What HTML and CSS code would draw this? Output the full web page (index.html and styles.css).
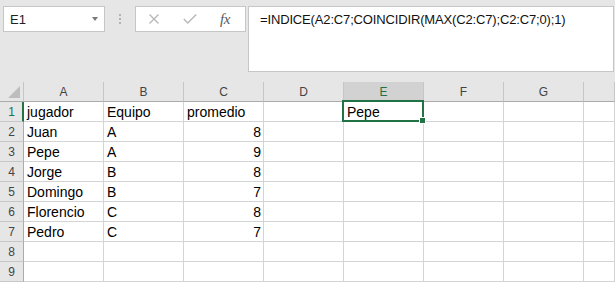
FILE: index.html
```html
<!DOCTYPE html>
<html lang="es">
<head>
  <meta charset="UTF-8" />
  <title>Libro1 - Excel</title>
  <link rel="stylesheet" href="styles.css">
</head>
<body>
  <div class="toolbar">
    <div class="nameBox">
      <span>E1</span>
      <span class="caret"></span>
    </div>
    <div class="grip"><i></i><i></i><i></i></div>
    <div class="fxButtons">
      <svg class="cancel" width="10" height="10" viewBox="0 0 10 10">
        <path d="M0.5 0.5 L9.5 9.5 M9.5 0.5 L0.5 9.5" />
      </svg>
      <svg class="enter" width="14" height="10" viewBox="0 0 14 10">
        <path d="M0.8 5 L4.8 9 L13.2 0.6" />
      </svg>
      <span class="fx">fx</span>
    </div>
    <div class="formula">=INDICE(A2:C7;COINCIDIR(MAX(C2:C7);C2:C7;0);1)</div>
  </div>

  <div class="sheet">
    <div class="row head">
      <div class="corner"><span class="tri"></span></div>
      <div class="colHead">A</div>
      <div class="colHead">B</div>
      <div class="colHead">C</div>
      <div class="colHead">D</div>
      <div class="colHead active">E</div>
      <div class="colHead">F</div>
      <div class="colHead">G</div>
      <div class="colHead last"></div>
    </div>

    <div class="row">
      <div class="rowHead active">1</div>
      <div class="c">jugador</div><div class="c">Equipo</div><div class="c">promedio</div>
      <div class="c"></div><div class="c">Pepe</div><div class="c"></div><div class="c"></div><div class="c"></div>
    </div>
    <div class="row">
      <div class="rowHead">2</div>
      <div class="c">Juan</div><div class="c">A</div><div class="c num">8</div>
      <div class="c"></div><div class="c"></div><div class="c"></div><div class="c"></div><div class="c"></div>
    </div>
    <div class="row">
      <div class="rowHead">3</div>
      <div class="c">Pepe</div><div class="c">A</div><div class="c num">9</div>
      <div class="c"></div><div class="c"></div><div class="c"></div><div class="c"></div><div class="c"></div>
    </div>
    <div class="row">
      <div class="rowHead">4</div>
      <div class="c">Jorge</div><div class="c">B</div><div class="c num">8</div>
      <div class="c"></div><div class="c"></div><div class="c"></div><div class="c"></div><div class="c"></div>
    </div>
    <div class="row">
      <div class="rowHead">5</div>
      <div class="c">Domingo</div><div class="c">B</div><div class="c num">7</div>
      <div class="c"></div><div class="c"></div><div class="c"></div><div class="c"></div><div class="c"></div>
    </div>
    <div class="row">
      <div class="rowHead">6</div>
      <div class="c">Florencio</div><div class="c">C</div><div class="c num">8</div>
      <div class="c"></div><div class="c"></div><div class="c"></div><div class="c"></div><div class="c"></div>
    </div>
    <div class="row">
      <div class="rowHead">7</div>
      <div class="c">Pedro</div><div class="c">C</div><div class="c num">7</div>
      <div class="c"></div><div class="c"></div><div class="c"></div><div class="c"></div><div class="c"></div>
    </div>
    <div class="row">
      <div class="rowHead">8</div>
      <div class="c"></div><div class="c"></div><div class="c"></div>
      <div class="c"></div><div class="c"></div><div class="c"></div><div class="c"></div><div class="c"></div>
    </div>
    <div class="row">
      <div class="rowHead">9</div>
      <div class="c"></div><div class="c"></div><div class="c"></div>
      <div class="c"></div><div class="c"></div><div class="c"></div><div class="c"></div><div class="c"></div>
    </div>

    <!-- seleccion activa en E1 -->
    <div class="selection"><span class="handle"></span></div>
  </div>
</body>
</html>
```

FILE: styles.css
```css
html, body {
  margin: 0;
  padding: 0;
  background: #e6e6e6;
  overflow: hidden;
  font-family: 'Liberation Sans', Arial, sans-serif;
  color: #000;
}

/* barra de formulas */
.toolbar {
  display: flex;
  align-items: flex-start;
  height: 82px;
  box-sizing: border-box;
  padding: 6px 1px 0 3px;
}

.nameBox {
  width: 102px;
  height: 26px;
  box-sizing: border-box;
  background: #fff;
  border: 1px solid #c6c6c6;
  display: flex;
  align-items: center;
  justify-content: space-between;
  padding: 0 6px 0 6px;
  font-size: 13px;
  color: #222;
}

.caret {
  width: 0;
  height: 0;
  border-left: 3.5px solid transparent;
  border-right: 3.5px solid transparent;
  border-top: 4px solid #7a7a7a;
  margin-bottom: 1px;
}

.grip {
  display: flex;
  flex-direction: column;
  gap: 2px;
  margin: 8px 14px 0 14px;
}

.grip i {
  display: block;
  width: 2px;
  height: 2px;
  background: #b4b4b4;
}

.fxButtons {
  width: 111px;
  height: 26px;
  box-sizing: border-box;
  background: #fff;
  border: 1px solid #c6c6c6;
  display: flex;
  align-items: center;
  padding-left: 13px;
}

.fxButtons svg {
  fill: none;
  stroke: #b8b8b8;
  stroke-width: 1.4;
}

.fxButtons .enter {
  margin-left: 24px;
}

.fx {
  margin-left: 23px;
  font-family: 'Liberation Serif', serif;
  font-style: italic;
  font-size: 15px;
  color: #5a5a5a;
  letter-spacing: -0.5px;
}

.formula {
  flex: 1;
  height: 66px;
  box-sizing: border-box;
  margin-left: 2px;
  background: #fff;
  border: 1px solid #c6c6c6;
  padding: 5px 0 0 11px;
  font-size: 13px;
  line-height: 16px;
  letter-spacing: -0.15px;
  color: #111;
  white-space: nowrap;
}

/* hoja */
.sheet {
  position: relative;
  background: #fff;
}

.row {
  display: grid;
  grid-template-columns: 24px repeat(7, 80px) 1fr;
  height: 20px;
}

.row > div {
  box-sizing: border-box;
  border-right: 1px solid #d4d4d4;
  border-bottom: 1px solid #d4d4d4;
  overflow: hidden;
  white-space: nowrap;
}

.row.head > div {
  background: #e6e6e6;
  border-right-color: #c6c6c6;
  border-bottom-color: #ababab;
}

.corner {
  display: flex;
  align-items: flex-end;
  justify-content: flex-end;
  padding: 0 3px 3px 0;
}

.corner .tri {
  width: 12px;
  height: 12px;
  background: #bdbdbd;
  clip-path: polygon(100% 0, 100% 100%, 0 100%);
}

.colHead {
  display: flex;
  align-items: center;
  justify-content: center;
  font-size: 12px;
  line-height: 14px;
  color: #444;
}

.colHead.active {
  background: #d2d2d2 !important;
  color: #217346;
}

.row > .rowHead {
  background: #e6e6e6;
  border-right-color: #ababab;
  border-bottom-color: #c6c6c6;
  display: flex;
  align-items: center;
  justify-content: center;
  font-size: 12px;
  line-height: 14px;
  color: #444;
}

.row > .rowHead.active {
  color: #217346;
  border-right: 2px solid #217346;
  padding-left: 1px;
}

.c {
  display: flex;
  align-items: flex-end;
  padding: 0 2px 1px 3px;
  font-size: 14px;
  line-height: 16px;
}

.c.num {
  justify-content: flex-end;
}

.selection {
  position: absolute;
  left: 342px;
  top: 18px;
  width: 82px;
  height: 22px;
  box-sizing: border-box;
  border: 2px solid #217346;
  pointer-events: none;
}

.handle {
  position: absolute;
  right: -4px;
  bottom: -4px;
  width: 5px;
  height: 5px;
  background: #217346;
  border: 1px solid #fff;
}
```
